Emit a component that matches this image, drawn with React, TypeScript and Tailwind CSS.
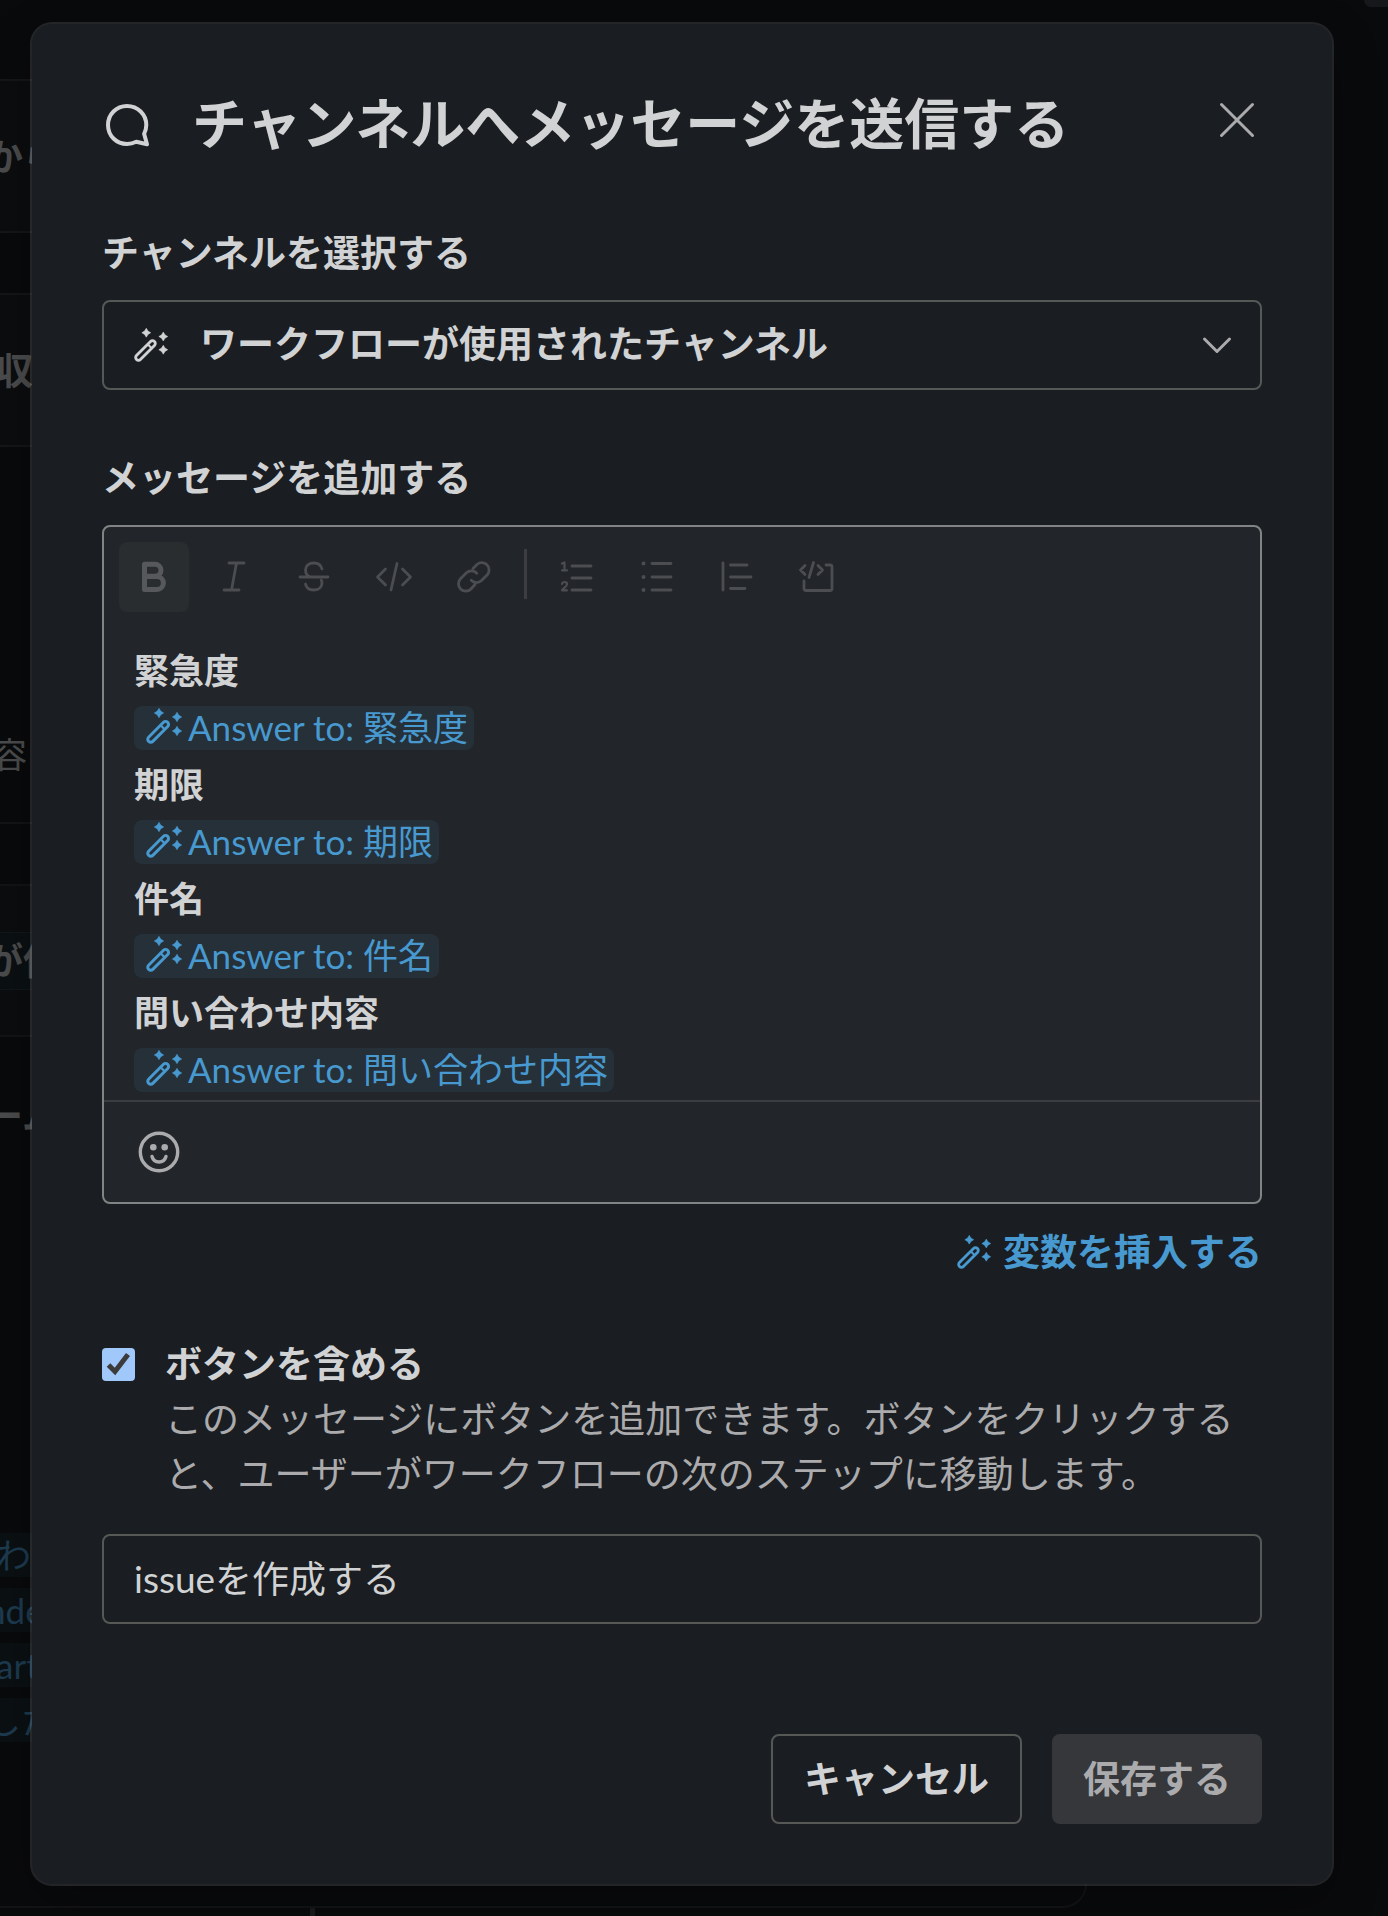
import { useState } from 'react';
import type { ReactNode } from 'react';

const FIELDS = ['緊急度', '期限', '件名', '問い合わせ内容'];

const TOOL_BTN = 'flex size-[70px] items-center justify-center rounded-lg';

function WandIcon({ className }: { className: string }) {
  return (
    <svg viewBox="0 0 36 36" className={className} aria-hidden="true">
      <g fill="none" stroke="currentColor" strokeWidth="3" strokeLinejoin="round" strokeLinecap="round">
        <path d="M17.500 14.300 2.600 29.200a2.900 2.900 0 0 0 0 4.100l.1.1a2.900 2.900 0 0 0 4.100 0L21.700 18.500a2.900 2.900 0 0 0 0-4.100l-.1-.1a2.900 2.900 0 0 0-4.100 0Z" />
        <path d="m14.600 17.300 4.100 4.100" strokeWidth="2.200" />
      </g>
      <g fill="currentColor" stroke="currentColor" strokeWidth=".6" strokeLinejoin="round">
        <path d="M13 .3q1.200 3.500 4.700 4.700-3.500 1.200-4.700 4.700Q11.800 6.200 8.300 5 11.800 3.800 13 .3Z" />
        <path d="M31 4.300q1.200 3.500 4.700 4.700-3.500 1.200-4.700 4.700Q29.800 10.200 26.300 9 29.800 7.800 31 4.300Z" />
        <path d="M31 18.300q1.200 3.500 4.700 4.700-3.500 1.200-4.700 4.700-1.200-3.500-4.700-4.700 3.500-1.200 4.700-4.700Z" />
      </g>
    </svg>
  );
}

function BubbleIcon() {
  return (
    <svg viewBox="0 0 50 50" className="size-[50px]" fill="none" stroke="currentColor" strokeWidth="4" strokeLinejoin="round" aria-hidden="true">
      <path d="M25 6C14.300 6 6 14.300 6 25s8.300 19 19 19c3.500 0 6.500-.8 9.300-2.200L45 44.300l-2.900-10.500C43.500 31 44.300 28.300 44.300 25 44.300 14.300 35.700 6 25 6Z" />
    </svg>
  );
}

function ToolIcon({ children }: { children: ReactNode }) {
  return (
    <svg viewBox="0 0 40 40" className="size-10" fill="none" stroke="currentColor" strokeWidth="2.800" strokeLinecap="round" strokeLinejoin="round" aria-hidden="true">
      {children}
    </svg>
  );
}

const TOOLS: { label: string; icon: ReactNode }[] = [
  {
    label: '太字',
    icon: <path strokeWidth="5" d="M10.500 7.200H21a6 6 0 0 1 0 12H10.500Zm0 12.300h12.400a6.500 6.500 0 0 1 0 13H10.500Z" />,
  },
  { label: '斜体', icon: <path d="M15 6h15M10 33h15M22.500 6l-5 27" /> },
  {
    label: '取り消し線',
    icon: <path d="M6 20h28M28 12c-1-4-4-6-8-6-5 0-8.500 2.800-8.500 7 0 3 1.500 5.500 4.500 7M11.500 27c.8 4 4 6 8.500 6 5 0 8-2.800 8-7 0-1-.2-2-.7-2.800" />,
  },
  { label: 'コード', icon: <path d="m11.500 12-8 8 8 8M28.500 12l8 8-8 8M23 6.500l-6 26.500" /> },
  {
    label: 'リンク',
    icon: (
      <path d="m19 11.500 4-4a7.300 7.300 0 0 1 10.300 10.300l-5.800 5.800a7.300 7.300 0 0 1-10.300-.3M21 27.500l-4 4.500A7.300 7.300 0 0 1 6.700 21.500l5.800-5.800a7.300 7.300 0 0 1 10.300.5" />
    ),
  },
];

const BLOCK_TOOLS: { label: string; icon: ReactNode }[] = [
  {
    label: '番号付きリスト',
    icon: (
      <>
        <path d="M15 9h19M15 21h19M15 33h19" />
        <path strokeWidth="2.200" d="M5 6.500 7.500 5.500V13M5 13.300h5M5 27c.4-1.400 1.300-2 2.600-2 1.500 0 2.400.9 2.400 2.200 0 2-2.500 3.300-5 6.100h5" />
      </>
    ),
  },
  {
    label: '箇条書き',
    icon: (
      <>
        <path d="M15 6.500h19M15 20h19M15 33h19" />
        <path strokeWidth="4" d="M6.500 6.500h.01M6.500 20h.01M6.500 33h.01" />
      </>
    ),
  },
  { label: '引用', icon: <path d="M6 6v27M13.500 8H30M13.500 20H34M13.500 31.500H28" /> },
  {
    label: 'コードブロック',
    icon: <path d="m8 8.500-4.500 4.500L8 17.500M21 8.500l4.500 4.500-4.500 4.500M16.500 5.500 12 20.500M29 8h4a2 2 0 0 1 2 2v21.500a2 2 0 0 1-2 2H9a2 2 0 0 1-2-2V24" />,
  },
];

function Chip({ name }: { name: string }) {
  return (
    <span className="inline-flex h-11 items-center gap-1.5 rounded-lg bg-[#263038] pr-1.5 pl-3 leading-none text-[#4799cf]" contentEditable={false}>
      <WandIcon className="mb-1 size-9" />
      <span>Answer to: {name}</span>
    </span>
  );
}

// Workflow steps seen dimmed behind the dialog
function Backdrop() {
  return (
    <div className="absolute inset-0 overflow-hidden text-[37px] leading-none whitespace-nowrap text-[#4b4c4d]" aria-hidden="true">
      <div className="absolute top-0 right-0 h-[7px] w-6 rounded-bl-lg bg-[#17181b]" />
      <div className="flex w-[1087px] flex-col pt-[79px]">
        <div className="flex h-[154px] items-center border-y-2 border-[#151618] bg-[#0c0d0f] font-bold">
          <span className="-ml-3.5">から</span>
        </div>
        <div className="mt-[60px] flex h-[154px] items-center border-y-2 border-[#151618] bg-[#0c0d0f] font-bold">
          <span className="-ml-1">収</span>
        </div>
        <div className="flex h-[375px] items-end pb-[50px] text-[35px]">
          <span className="-ml-2">容</span>
        </div>
        <div className="h-[62px] border-t-2 border-[#131416]" />
        <div className="flex h-[153px] flex-col justify-center border-y-2 border-[#131416] bg-[#0c0d0f] font-bold">
          <div className="flex h-[58px] items-center border-y border-[#12161a] bg-[#0b1013]">
            <span className="-ml-3.5">が使</span>
          </div>
        </div>
        <div className="flex h-[496px] items-start pt-[60px] font-bold">
          <span className="-ml-3.5">ーム</span>
        </div>
        <div className="flex h-[375px] flex-col gap-[11px] rounded-br-3xl border-r-2 border-b-2 border-[#131416] text-[35px] text-[#1d3b50]">
          <div className="flex h-11 items-center bg-[#0b1013]"><span className="-ml-1">わせ</span></div>
          <div className="flex h-11 items-center bg-[#0b1013]"><span className="-ml-3.5">nde</span></div>
          <div className="flex h-11 items-center bg-[#0b1013]"><span className="-ml-1">art</span></div>
          <div className="flex h-11 items-center bg-[#0b1013]"><span className="-ml-3.5">した</span></div>
        </div>
        <div className="ml-[310px] h-4 w-[5px] bg-[#1a1b1d]" />
      </div>
    </div>
  );
}

export default function App() {
  const [withButton, setWithButton] = useState(true);
  const [buttonLabel, setButtonLabel] = useState('issueを作成する');

  return (
    <div className="relative min-h-screen overflow-hidden bg-[#090a0c] pt-6 pr-14 pb-8 pl-8 font-[Lato,'Noto_Sans_CJK_JP',sans-serif] text-[37px] leading-[55px] text-[#d1d2d3]">
      <Backdrop />

      <div
        role="dialog"
        aria-labelledby="dialog-title"
        className="relative rounded-[20px] bg-[#1a1d21] px-[70px] pt-16 pb-[60px] shadow-[0_0_0_2px_rgba(232,232,232,0.13),0_18px_48px_rgba(0,0,0,0.3)]"
      >
        <header className="flex items-start">
          <div className="flex h-[74px] items-center">
            <BubbleIcon />
          </div>
          <h1 id="dialog-title" className="ml-10 flex-1 text-[55px] leading-[70px] font-bold">
            チャンネルへメッセージを送信する
          </h1>
          <button type="button" aria-label="閉じる" className="flex h-16 w-[50px] items-center justify-center text-[#ababad]">
            <svg viewBox="0 0 36 36" className="size-9" fill="none" stroke="currentColor" strokeWidth="3" strokeLinecap="round" aria-hidden="true">
              <path d="m2.500 2.500 31 31M33.500 2.500l-31 31" />
            </svg>
          </button>
        </header>

        <label htmlFor="channel" className="mt-[63px] block font-bold">
          チャンネルを選択する
        </label>
        <div className="relative mt-5">
          <select
            id="channel"
            className="h-[90px] w-full appearance-none rounded-lg border-2 border-[#565856] bg-transparent pr-20 pb-[3px] pl-24 font-bold"
          >
            <option>ワークフローが使用されたチャンネル</option>
          </select>
          <span className="pointer-events-none absolute inset-y-0 right-[30px] left-8 flex items-center justify-between">
            <WandIcon className="size-[34px]" />
            <svg viewBox="0 0 30 30" className="size-[30px] text-[#ababad]" fill="none" stroke="currentColor" strokeWidth="3" strokeLinecap="round" strokeLinejoin="round" aria-hidden="true">
              <path d="m2.500 9 12.500 12.500L27.500 9" />
            </svg>
          </span>
        </div>

        <h2 id="message-label" className="mt-[60px] font-bold">
          メッセージを追加する
        </h2>
        <div className="mt-5 rounded-lg border-2 border-[#818385] bg-[#222529]">
          <div role="toolbar" aria-label="書式" className="flex items-center gap-2.5 px-[15px] pt-[15px]">
            {TOOLS.map((t, i) => (
              <button
                key={t.label}
                type="button"
                aria-label={t.label}
                className={i === 0 ? `${TOOL_BTN} bg-[#292d30] text-[#56585c]` : `${TOOL_BTN} text-[#4b4d51]`}
              >
                <ToolIcon>{t.icon}</ToolIcon>
              </button>
            ))}
            <span className="mx-[5px] mb-1.5 h-[50px] w-[3px] bg-[#3b3d40]" />
            {BLOCK_TOOLS.map(t => (
              <button key={t.label} type="button" aria-label={t.label} className={`${TOOL_BTN} text-[#4b4d51]`}>
                <ToolIcon>{t.icon}</ToolIcon>
              </button>
            ))}
          </div>

          <div
            role="textbox"
            aria-multiline="true"
            aria-labelledby="message-label"
            contentEditable
            suppressContentEditableWarning
            className="mt-[30px] px-[30px] pb-0.5 text-[35px] leading-[57px] outline-none"
          >
            {FIELDS.map(name => (
              <div key={name}>
                <p className="h-[57px] font-bold">{name}</p>
                <p className="flex h-[57px] items-center">
                  <Chip name={name} />
                </p>
              </div>
            ))}
          </div>

          <div className="flex h-[102px] items-center border-t-2 border-[#3b3d40] px-[34px]">
            <button type="button" aria-label="絵文字" className="text-[#ababad]">
              <svg viewBox="0 0 42 42" className="size-[42px]" fill="none" stroke="currentColor" strokeWidth="3.400" strokeLinecap="round" aria-hidden="true">
                <circle cx="21" cy="21" r="18.700" />
                <path d="M14 25.500c1 3.500 3.800 5.500 7 5.500s6-2 7-5.500" />
                <circle cx="15.300" cy="16.300" r="3.300" fill="currentColor" stroke="none" />
                <circle cx="26.700" cy="16.300" r="3.300" fill="currentColor" stroke="none" />
              </svg>
            </button>
          </div>
        </div>

        <div className="mt-5 flex justify-end">
          <button type="button" className="flex items-center gap-3 font-bold text-[#4799cf]">
            <WandIcon className="size-[34px]" />
            変数を挿入する
          </button>
        </div>

        <div className="mt-[57px] flex gap-[30px]">
          <span className="relative mt-3 size-[33px] shrink-0">
            <input
              id="with-button"
              type="checkbox"
              checked={withButton}
              onChange={e => setWithButton(e.target.checked)}
              aria-describedby="with-button-hint"
              className="block size-[33px] appearance-none rounded-sm border-2 border-[#818385] checked:border-[#a1c8fb] checked:bg-[#a1c8fb]"
            />
            {withButton && (
              <svg viewBox="0 0 33 33" className="pointer-events-none absolute inset-0" fill="none" stroke="#3b3b3b" strokeWidth="5" aria-hidden="true">
                <path d="m6.500 17 6.500 6.500L26 6.500" />
              </svg>
            )}
          </span>
          <div>
            <label htmlFor="with-button" className="block font-bold">
              ボタンを含める
            </label>
            <p id="with-button-hint" className="text-[#ababad]">
              このメッセージにボタンを追加できます。ボタンをクリックすると、ユーザーがワークフローの次のステップに移動します。
            </p>
          </div>
        </div>

        <input
          type="text"
          aria-label="ボタンのラベル"
          value={buttonLabel}
          onChange={e => setButtonLabel(e.target.value)}
          className="mt-[33px] block h-[90px] w-full rounded-lg border-2 border-[#565856] bg-transparent px-[30px] pb-1"
        />

        <footer className="mt-[110px] flex justify-end gap-[30px]">
          <button type="button" className="h-[90px] rounded-lg border-2 border-[#565856] px-[31px] pb-0.5 font-bold">
            キャンセル
          </button>
          <button type="button" className="h-[90px] rounded-lg bg-[#35373b] px-[31px] pb-0.5 font-bold text-[#ababad]">
            保存する
          </button>
        </footer>
      </div>
    </div>
  );
}
